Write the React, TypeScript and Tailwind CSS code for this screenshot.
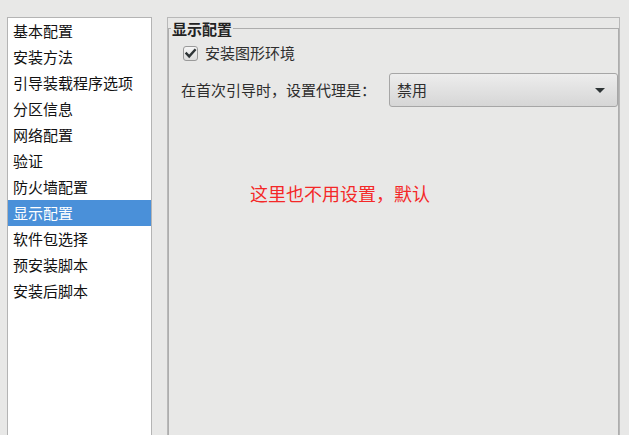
import React from "react";

const items = [
  "基本配置",
  "安装方法",
  "引导装载程序选项",
  "分区信息",
  "网络配置",
  "验证",
  "防火墙配置",
  "显示配置",
  "软件包选择",
  "预安装脚本",
  "安装后脚本",
];

const font = { fontFamily: '"Noto Sans CJK SC", "Noto Sans", sans-serif' };

export default function App() {
  return (
    <div
      className="w-[629px] h-[435px] overflow-hidden bg-[#e8e8e7] flex pt-[17px] pl-[7px]"
      style={font}
    >
      {/* left list */}
      <div className="w-[145px] h-[440px] shrink-0 bg-white border border-[#b4b4b4]">
        {items.map((t, i) => (
          <div
            key={t}
            className={
              "h-[26px] pl-[5px] pb-[2px] flex items-center text-[15px] leading-none " +
              (i === 7 ? "bg-[#4a90d9] text-white" : "text-[#111]")
            }
          >
            {t}
          </div>
        ))}
      </div>

      {/* right frame */}
      <div className="ml-[15px] w-[453px] h-[440px] shrink-0 border-t border-l border-r border-[#b8b8b8]">
        <fieldset className="h-full border-t border-l border-r border-[#adadad] m-0 p-0">
          <legend className="ml-[2px] px-[1px] h-[21px] leading-[21px] text-[15px] font-bold text-[#222]">
            显示配置
          </legend>
          <div className="mt-[4px] ml-[14px] h-[20px] flex items-center">
            <div className="w-[15px] h-[15px] rounded-[3px] border border-[#9a9a9a] bg-gradient-to-b from-[#f6f6f6] to-[#dcdcdc] flex items-center justify-center">
              <svg width="13" height="13" viewBox="0 0 13 13">
                <path
                  d="M2.5 6.5 L5.2 9.4 L10.8 3.2"
                  fill="none"
                  stroke="#2e3436"
                  strokeWidth="2.4"
                  strokeLinecap="square"
                  strokeLinejoin="miter"
                />
              </svg>
            </div>
            <span className="ml-[7px] pb-[2px] text-[15px] leading-none text-[#2e2e2e]">
              安装图形环境
            </span>
          </div>
          <div className="mt-[10px] ml-[12px] h-[34px] flex items-center">
            <span className="pb-[2px] text-[15px] leading-none text-[#2e2e2e]">
              在首次引导时，设置代理是：
            </span>
            <div className="ml-auto w-[229px] h-[34px] rounded-[3px] border border-[#a6a6a6] bg-gradient-to-b from-[#ededed] to-[#d6d6d6] flex items-center pl-[7px] pr-[12px]">
              <span className="pb-[2px] text-[15px] leading-none text-[#2e2e2e]">禁用</span>
              <svg className="ml-auto" width="10" height="5" viewBox="0 0 10 5">
                <path d="M0 0 L10 0 L5 5 Z" fill="#2e3436" />
              </svg>
            </div>
          </div>
          <div className="mt-[74px] pl-[81px] text-[18px] leading-[24px] text-[#f42828]">
            这里也不用设置，默认
          </div>
        </fieldset>
      </div>
    </div>
  );
}
